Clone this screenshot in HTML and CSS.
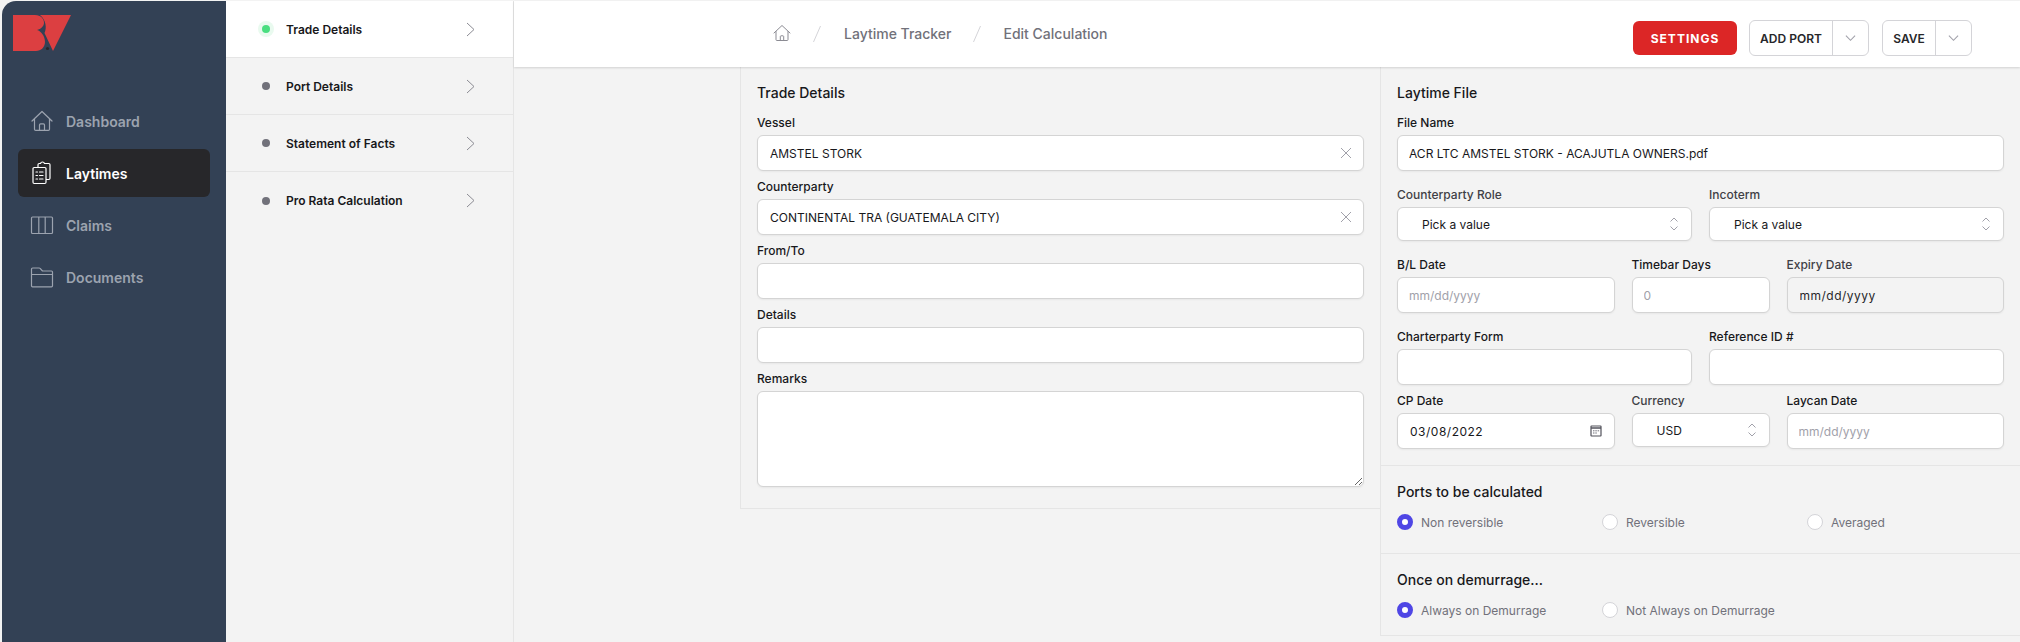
FILE: index.html
```html
<!DOCTYPE html>
<html lang="en">
<head>
<meta charset="utf-8">
<title>Edit Calculation</title>
<link rel="stylesheet" href="styles.css">
</head>
<body>
<div class="app">
  <aside class="sidebar">
    <svg class="logo" viewBox="13 15 58 36" width="58" height="36">
      <path class="logo-red" d="M40 15H71L53 51L44.5 33C47 28 46 20 40 15Z"/>
      <path class="logo-red" d="M13 15H35C41 15 44 19 44 23C44 26 41 29 37 30C41 31 45 36 45 42C45 47 41 51 36 51H13Z"/>
      <circle class="logo-mark" cx="47.5" cy="48.5" r="1.6"/>
    </svg>
    <nav class="menu">
      <a class="menu-item">
        <svg class="menu-icon" viewBox="0 0 24 24"><path d="M2 12 12 2.5 22 12M4.5 10v10.200c0 .7.5 1.200 1.200 1.200h12.600c.7 0 1.200-.5 1.200-1.200V10M9.500 21.400V16c0-.6.5-1.100 1.100-1.100h2.800c.6 0 1.100.5 1.100 1.100v5.400"/></svg>
        <span>Dashboard</span>
      </a>
      <a class="menu-item active">
        <svg class="menu-icon" viewBox="0 0 24 24"><path d="M8 6.500H4.200C3.500 6.500 3 7 3 7.700v13.600c0 .7.500 1.200 1.200 1.200h10.600c.7 0 1.200-.5 1.200-1.200V7.700c0-.7-.5-1.200-1.200-1.200H8ZM8 6.500V3.700c0-.7.500-1.200 1.200-1.200h1.300c.3-1 1-1.500 2-1.500s1.700.5 2 1.500h4.300c.7 0 1.200.5 1.200 1.200v13.600c0 .7-.5 1.200-1.200 1.200H16M6 11h1.500M9.500 11H13M6 14.500h1.500M9.500 14.500H13M6 18h1.500M9.500 18H13"/></svg>
        <span>Laytimes</span>
      </a>
      <a class="menu-item">
        <svg class="menu-icon" viewBox="0 0 24 24"><path d="M2.500 4h19c.6 0 1 .4 1 1v14.500c0 .6-.4 1-1 1h-19c-.6 0-1-.4-1-1V5c0-.6.4-1 1-1ZM8.800 4v16.500M15.200 4v16.500"/></svg>
        <span>Claims</span>
      </a>
      <a class="menu-item">
        <svg class="menu-icon" viewBox="0 0 24 24"><path d="M1.500 9.500V4.200C1.500 3.500 2 3 2.700 3h6.500c.4 0 .7.200.9.400L12.500 6h9c.6 0 1 .4 1 1v13.800c0 .6-.4 1-1 1h-19c-.6 0-1-.4-1-1V9.500Zm0 0h21"/></svg>
        <span>Documents</span>
      </a>
    </nav>
  </aside>

  <nav class="steps">
    <a class="step current"><span class="dot"></span><span class="step-label">Trade Details</span><svg class="step-chevron" viewBox="0 0 9 15"><path d="M1 1l7 6.500-7 6.500"/></svg></a>
    <a class="step"><span class="dot"></span><span class="step-label">Port Details</span><svg class="step-chevron" viewBox="0 0 9 15"><path d="M1 1l7 6.500-7 6.500"/></svg></a>
    <a class="step"><span class="dot"></span><span class="step-label">Statement of Facts</span><svg class="step-chevron" viewBox="0 0 9 15"><path d="M1 1l7 6.500-7 6.500"/></svg></a>
    <a class="step"><span class="dot"></span><span class="step-label">Pro Rata Calculation</span><svg class="step-chevron" viewBox="0 0 9 15"><path d="M1 1l7 6.500-7 6.500"/></svg></a>
  </nav>

  <div class="main">
    <header class="topbar">
      <div class="crumbs">
        <svg class="crumb-home" viewBox="0 0 18 18"><path d="M1 9 9 1.500 17 9M3 7.500v8.200c0 .5.300.8.800.8h10.400c.5 0 .8-.3.800-.8V7.500M7.300 16.500v-4c0-.4.300-.7.700-.7h2c.4 0 .7.300.7.700v4"/></svg>
        <svg class="crumb-slash" viewBox="0 0 8 16"><path d="M7.500 0 .5 16"/></svg>
        <span class="crumb">Laytime Tracker</span>
        <svg class="crumb-slash" viewBox="0 0 8 16"><path d="M7.500 0 .5 16"/></svg>
        <span class="crumb">Edit Calculation</span>
      </div>
      <div class="actions">
        <button class="btn-settings">SETTINGS</button>
        <div class="split split-port">
          <button class="split-main">ADD PORT</button>
          <button class="split-more"><svg viewBox="0 0 12 8"><path d="M1 1.500l5 5 5-5"/></svg></button>
        </div>
        <div class="split split-save">
          <button class="split-main">SAVE</button>
          <button class="split-more"><svg viewBox="0 0 12 8"><path d="M1 1.500l5 5 5-5"/></svg></button>
        </div>
      </div>
    </header>

    <div class="content">
      <section class="panel panel-left">
        <h2 class="panel-title">Trade Details</h2>
        <div class="field">
          <label class="label">Vessel</label>
          <div class="control"><input class="input input-inset" type="text" value="AMSTEL STORK"><svg class="clear" viewBox="0 0 12 12"><path d="M1 1l10 10M11 1 1 11"/></svg></div>
        </div>
        <div class="field">
          <label class="label">Counterparty</label>
          <div class="control"><input class="input input-inset" type="text" value="CONTINENTAL TRA (GUATEMALA CITY)"><svg class="clear" viewBox="0 0 12 12"><path d="M1 1l10 10M11 1 1 11"/></svg></div>
        </div>
        <div class="field">
          <label class="label">From/To</label>
          <input class="input" type="text">
        </div>
        <div class="field">
          <label class="label">Details</label>
          <input class="input" type="text">
        </div>
        <div class="field field-last">
          <label class="label">Remarks</label>
          <textarea class="input textarea"></textarea>
        </div>
      </section>

      <section class="panel panel-right">
        <div class="file-block">
          <h2 class="panel-title">Laytime File</h2>
          <div class="field">
            <label class="label">File Name</label>
            <input class="input" type="text" value="ACR LTC AMSTEL STORK - ACAJUTLA OWNERS.pdf">
          </div>
          <div class="row-two row-gap">
            <div>
              <label class="label muted">Counterparty Role</label>
              <div class="select"><span>Pick a value</span><svg class="updown" viewBox="0 0 10 16"><path d="M1.500 5.500 5 2l3.500 3.500M1.500 10.500 5 14l3.500-3.500"/></svg></div>
            </div>
            <div>
              <label class="label muted">Incoterm</label>
              <div class="select"><span>Pick a value</span><svg class="updown" viewBox="0 0 10 16"><path d="M1.500 5.500 5 2l3.500 3.500M1.500 10.500 5 14l3.500-3.500"/></svg></div>
            </div>
          </div>
          <div class="row-three row-gap">
            <div>
              <label class="label">B/L Date</label>
              <input class="input" type="text" placeholder="mm/dd/yyyy">
            </div>
            <div>
              <label class="label">Timebar Days</label>
              <input class="input" type="text" placeholder="0">
            </div>
            <div>
              <label class="label muted">Expiry Date</label>
              <input class="input input-date disabled input-inset" type="text" value="mm/dd/yyyy" disabled>
            </div>
          </div>
          <div class="row-two row-gap">
            <div>
              <label class="label">Charterparty Form</label>
              <input class="input" type="text">
            </div>
            <div>
              <label class="label">Reference ID #</label>
              <input class="input" type="text">
            </div>
          </div>
          <div class="row-three row-tight">
            <div>
              <label class="label">CP Date</label>
              <div class="control"><input class="input input-date input-inset" type="text" value="03/08/2022"><svg class="calendar" viewBox="0 0 12 12"><path class="calendar-frame" d="M1.500 1h9c.3 0 .5.200.5.500v9c0 .3-.2.500-.5.500h-9c-.3 0-.5-.2-.5-.500v-9c0-.3.200-.5.500-.5Z"/><path class="calendar-band" d="M1 3h10"/><path class="calendar-days" d="M3 5.800h1.500M5.300 5.800h1.500M7.600 5.800h1.500M3 8h1.500M5.300 8h1.500"/></svg></div>
            </div>
            <div>
              <label class="label muted">Currency</label>
              <div class="select"><span>USD</span><svg class="updown" viewBox="0 0 10 16"><path d="M1.500 5.500 5 2l3.500 3.500M1.500 10.500 5 14l3.500-3.500"/></svg></div>
            </div>
            <div>
              <label class="label">Laycan Date</label>
              <input class="input" type="text" placeholder="mm/dd/yyyy">
            </div>
          </div>
        </div>

        <div class="radio-block">
          <h2 class="panel-title">Ports to be calculated</h2>
          <div class="radios">
            <label class="radio"><input type="radio" name="ports" checked><span>Non reversible</span></label>
            <label class="radio"><input type="radio" name="ports"><span>Reversible</span></label>
            <label class="radio"><input type="radio" name="ports"><span>Averaged</span></label>
          </div>
        </div>

        <div class="radio-block radio-block-last">
          <h2 class="panel-title">Once on demurrage...</h2>
          <div class="radios">
            <label class="radio"><input type="radio" name="dem" checked><span>Always on Demurrage</span></label>
            <label class="radio"><input type="radio" name="dem"><span>Not Always on Demurrage</span></label>
          </div>
        </div>
      </section>
    </div>
  </div>
</div>
</body>
</html>
```

FILE: styles.css
```css
* { box-sizing: border-box; }

html, body {
  margin: 0;
  height: 642px;
  overflow: hidden;
}

body {
  background: #f3f3f3;
  font-family: Inter, "Liberation Sans", sans-serif;
  color: #18181b;
}

.app {
  display: flex;
  height: 642px;
  padding: 1px 0 0 2px;
}

/* Sidebar */
.sidebar {
  width: 224px;
  flex: none;
  background: #334155;
  border-top-left-radius: 14px;
  padding: 14px 16px 0;
}

.logo {
  display: block;
  margin-left: -5px;
}

.logo-red { fill: #dc3f41; }
.logo-mark { fill: #27272a; }

.menu {
  display: flex;
  flex-direction: column;
  gap: 4px;
  margin-top: 46px;
}

.menu-item {
  display: flex;
  align-items: center;
  gap: 12px;
  height: 48px;
  padding-left: 12px;
  border-radius: 6px;
  font-size: 14px;
  font-weight: 600;
  color: #9ca3af;
}

.menu-item.active {
  background: #27272a;
  color: #fff;
}

.menu-icon {
  width: 24px;
  height: 24px;
  fill: none;
  stroke: #9ca3af;
  stroke-width: 1.200;
  stroke-linecap: round;
  stroke-linejoin: round;
}

.menu-item.active .menu-icon { stroke: #fff; }

/* Steps */
.steps {
  width: 288px;
  flex: none;
  background: #f3f3f3;
  border-right: 1px solid #e5e5e5;
}

.step {
  display: flex;
  align-items: center;
  height: 57px;
  padding-left: 36px;
  border-bottom: 1px solid #e5e5e5;
  font-size: 12px;
  font-weight: 600;
  color: #18181b;
}

.step:last-child { border-bottom: 0; }
.step.current { background: #fff; }

.dot {
  width: 8px;
  height: 8px;
  margin-right: 16px;
  border-radius: 50%;
  background: #71717a;
}

.step.current .dot {
  background: #4ade80;
  box-shadow: 0 0 0 4px #e9faef;
}

.step-label { flex: 1; }

.step-chevron {
  width: 9px;
  height: 15px;
  margin-right: 38px;
  fill: none;
  stroke: #8b8b93;
  stroke-width: 1;
}

/* Main */
.main {
  flex: 1;
  min-width: 0;
  display: flex;
  flex-direction: column;
}

.topbar {
  display: flex;
  align-items: center;
  justify-content: space-between;
  height: 66px;
  flex: none;
  padding: 0 48px 0 259px;
  background: #fff;
  box-shadow: 0 1px 2px rgba(0, 0, 0, .14);
  position: relative;
}

.crumbs {
  display: flex;
  align-items: center;
  gap: 22px;
  font-size: 14px;
  font-weight: 500;
  color: #71717a;
}

.crumb { line-height: 20px; }

.crumb-home {
  width: 18px;
  height: 18px;
  margin-bottom: 3px;
  fill: none;
  stroke: #8b8b93;
  stroke-width: 1;
  stroke-linejoin: round;
  stroke-linecap: round;
}

.crumb-slash {
  width: 8px;
  height: 16px;
  fill: none;
  stroke: #d4d4d8;
  stroke-width: 1;
}

.crumb-home + .crumb-slash { margin-right: 1px; }

.actions {
  display: flex;
  align-items: center;
  gap: 12px;
  margin-top: 8px;
}

button {
  font-family: inherit;
  margin: 0;
  padding: 0;
  background: none;
  border: 0;
}

.btn-settings {
  width: 104px;
  height: 34px;
  border-radius: 6px;
  background: #dc2626;
  color: #fff;
  font-size: 12px;
  font-weight: 700;
  letter-spacing: 1px;
}

.split {
  display: flex;
  height: 36px;
  border: 1px solid #d4d4d8;
  border-radius: 6px;
  background: #fff;
}

.split-port { width: 120px; }
.split-save { width: 90px; margin-left: 1px; }

.split-main {
  flex: 1;
  font-size: 12px;
  font-weight: 600;
  color: #27272a;
  border-right: 1px solid #d4d4d8;
}

.split-more {
  width: 35px;
  display: flex;
  align-items: center;
  justify-content: center;
}

.split-more svg {
  width: 11px;
  height: 8px;
  fill: none;
  stroke: #a1a1aa;
  stroke-width: 1.200;
}

.content {
  display: flex;
  align-items: flex-start;
  padding-left: 226px;
}

/* Panels */
.panel {
  width: 640px;
  flex: none;
  border-left: 1px solid #e5e5e5;
  border-bottom: 1px solid #e5e5e5;
}

.panel-left { padding: 16px 16px 21px; }

.panel-title {
  margin: 0;
  font-size: 14px;
  line-height: 20px;
  font-weight: 500;
  color: #18181b;
}

.label {
  display: block;
  margin-bottom: 4px;
  font-size: 12px;
  line-height: 16px;
  font-weight: 500;
  color: #18181b;
}

.label.muted { color: #3f3f46; }

.panel-title + .field { margin-top: 12px; }
.field { margin-bottom: 8px; }
.field-last { margin-bottom: 0; }

.control { position: relative; }

.input {
  display: block;
  width: 100%;
  height: 36px;
  padding: 0 11px;
  border: 1px solid #d4d4d4;
  border-radius: 6px;
  background: #fff;
  box-shadow: 0 1px 2px rgba(0, 0, 0, .05);
  font-family: inherit;
  font-size: 12px;
  font-weight: 400;
  color: #18181b;
  outline: none;
}

.input-inset { padding-left: 12px; }

.input::placeholder { color: #a1a1aa; opacity: 1; }

.input-date { letter-spacing: .5px; }

.input.disabled {
  background: #f3f3f3;
  color: #27272a;
  -webkit-text-fill-color: #27272a;
  opacity: 1;
}

.textarea {
  height: 96px;
  padding: 8px 12px;
  resize: vertical;
}

.clear {
  position: absolute;
  top: 12px;
  right: 12px;
  width: 12px;
  height: 12px;
  fill: none;
  stroke: #a1a1aa;
  stroke-width: 1;
}

.calendar {
  position: absolute;
  top: 12px;
  right: 13px;
  width: 12px;
  height: 12px;
  fill: none;
  stroke: #52525b;
}

.calendar-frame { stroke-width: 1.200; }
.calendar-band { stroke-width: 1.500; }
.calendar-days { stroke-width: 1; stroke: #71717a; }

.file-block {
  padding: 16px;
  border-bottom: 1px solid #e5e5e5;
}

.row-two {
  display: grid;
  grid-template-columns: 1fr 1fr;
  gap: 17px;
}

.row-three {
  display: grid;
  grid-template-columns: 1fr 138px 1fr;
  gap: 17px;
}

.row-gap { margin-top: 16px; }
.row-tight { margin-top: 8px; }
.file-block > .field { margin-bottom: 0; }

.select {
  display: flex;
  align-items: center;
  justify-content: space-between;
  height: 34px;
  padding: 0 12px 0 24px;
  border: 1px solid #d4d4d4;
  border-radius: 6px;
  background: #fff;
  box-shadow: 0 1px 2px rgba(0, 0, 0, .05);
  font-size: 12px;
  color: #18181b;
}

.updown {
  width: 10px;
  height: 16px;
  fill: none;
  stroke: #a1a1aa;
  stroke-width: 1;
}

.radio-block {
  padding: 16px 16px 23px;
  border-bottom: 1px solid #e5e5e5;
}

.radio-block-last {
  padding-bottom: 17px;
  border-bottom: 0;
}

.radios {
  display: flex;
  margin-top: 12px;
}

.radio {
  display: flex;
  align-items: center;
  flex: none;
  gap: 8px;
  width: 205px;
  height: 16px;
  font-size: 12px;
  font-weight: 400;
  color: #71717a;
}

.radio input {
  appearance: none;
  -webkit-appearance: none;
  width: 16px;
  height: 16px;
  margin: 0;
  flex: none;
  border: 1px solid #d4d4d8;
  border-radius: 50%;
  background: #fff;
}

.radio input:checked {
  border: 5px solid #4f46e5;
}
```
